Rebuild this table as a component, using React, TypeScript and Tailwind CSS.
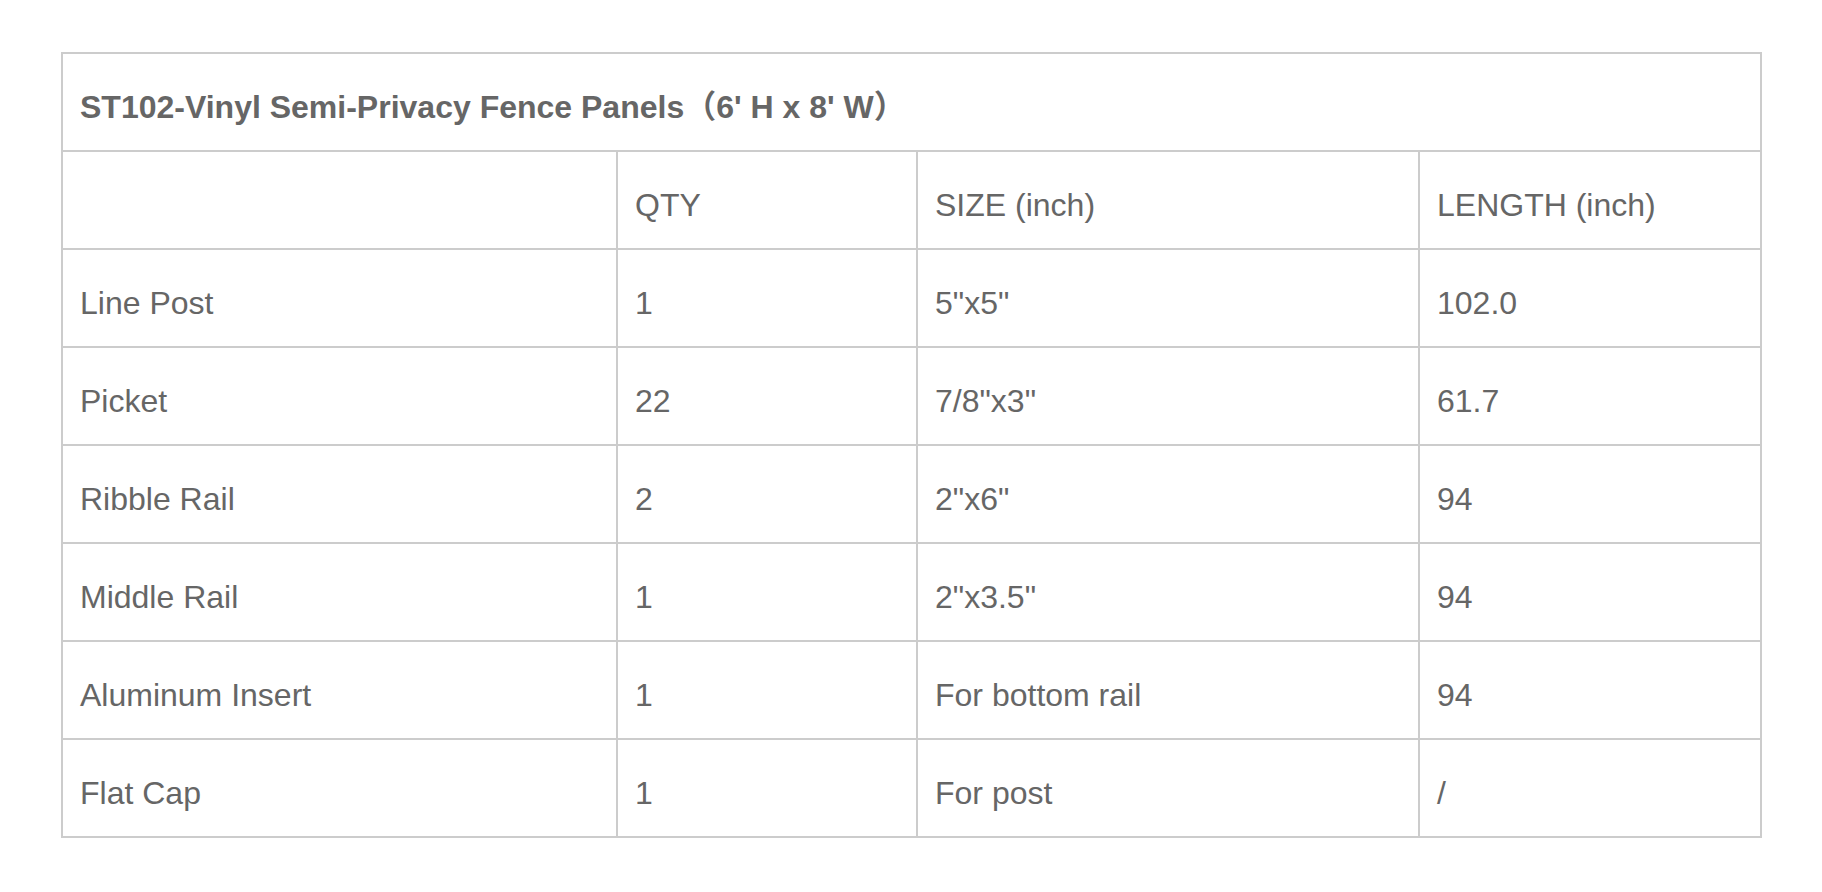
import React from "react";

const rows: [string, string, string, string][] = [
  ["", "QTY", "SIZE (inch)", "LENGTH (inch)"],
  ["Line Post", "1", "5\"x5\"", "102.0"],
  ["Picket", "22", "7/8\"x3\"", "61.7"],
  ["Ribble Rail", "2", "2\"x6\"", "94"],
  ["Middle Rail", "1", "2\"x3.5\"", "94"],
  ["Aluminum Insert", "1", "For bottom rail", "94"],
  ["Flat Cap", "1", "For post", "/"],
];

const cell =
  "h-[98px] border-r-2 border-b-2 border-[#cccccc] pl-[17px] pt-[35px] leading-[36px] whitespace-nowrap";

export default function App() {
  return (
    <div
      className="w-[1822px] h-[892px] bg-white pt-[52px] pl-[61px] text-[#666666] text-[32px]"
      style={{ fontFamily: '"Liberation Sans", Arial, "Noto Sans CJK SC", sans-serif' }}
    >
      <div className="w-[1701px] border-l-2 border-t-2 border-[#cccccc] grid grid-cols-[555px_300px_502px_342px]">
        <div className={`${cell} col-span-4 font-bold`}>
          ST102-Vinyl Semi-Privacy Fence Panels（6' H x 8' W）
        </div>
        {rows.map((r, i) => (
          <React.Fragment key={i}>
            {r.map((c, j) => (
              <div key={j} className={cell}>
                {c}
              </div>
            ))}
          </React.Fragment>
        ))}
      </div>
    </div>
  );
}
